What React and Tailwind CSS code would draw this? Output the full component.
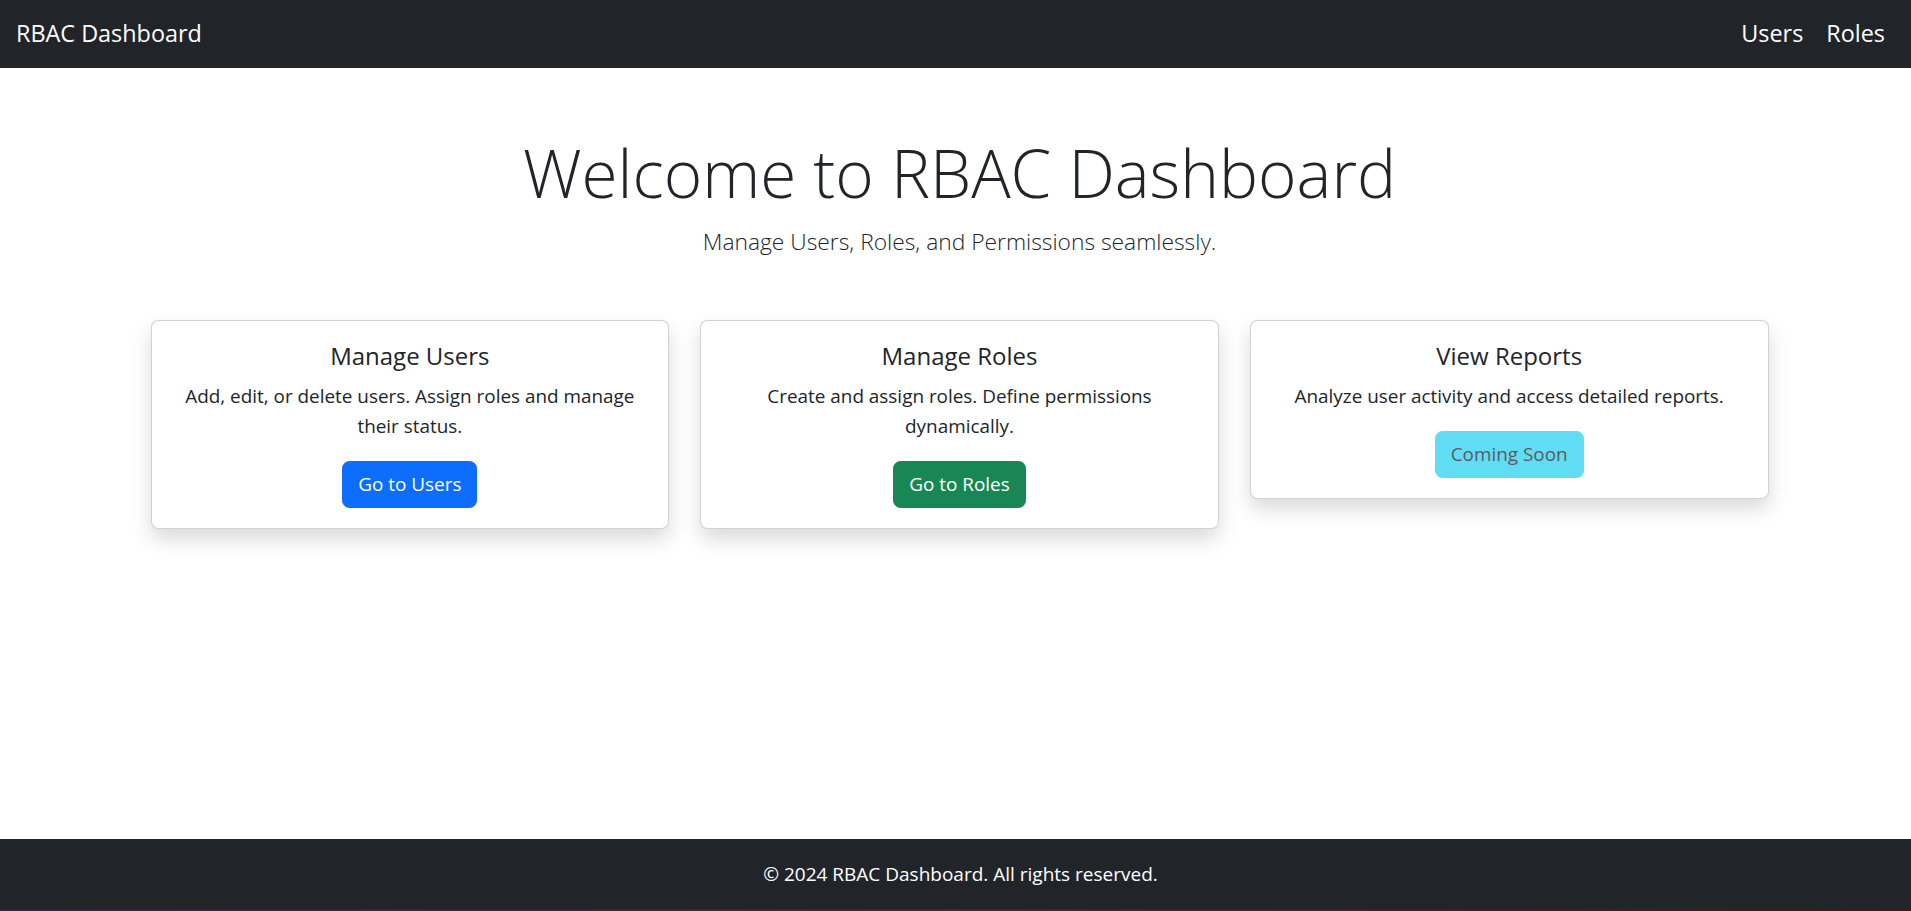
import React from "react";

function Card({ title, text, children }) {
  return (
    <div className="rounded-[7.5px] border border-black/[0.175] bg-white p-[20px] text-center shadow-[0_10px_20px_rgba(0,0,0,0.15)]">
      <h5 className="mb-[10px] text-[24px] font-medium leading-[30px] text-[#212529]">{title}</h5>
      <p className="mb-[20px] text-[18.9px] leading-[30px] text-[#212529]">{text}</p>
      {children}
    </div>
  );
}

export default function App() {
  return (
    <div className="flex h-[911px] flex-col overflow-hidden bg-white font-['Open_Sans',sans-serif] text-[#212529]">
      <nav className="flex h-[68px] shrink-0 items-center justify-between bg-[#212529] pl-[16px] pr-[15px]">
        <a href="#" className="text-[23.4px] leading-[37.5px] text-white">RBAC Dashboard</a>
        <div className="flex items-center">
          <a href="#" className="pl-[11px] pr-[12px] text-[23.4px] leading-[37.5px] text-white">Users</a>
          <a href="#" className="px-[11px] text-[23.4px] leading-[37.5px] text-white">Roles</a>
        </div>
      </nav>

      <main className="flex-1 pl-[8px]">
        <div className="mt-[63px] text-center">
          <h1 className="text-[65.7px] font-light leading-[84px] text-[#212529]">Welcome to RBAC Dashboard</h1>
          <p className="mt-[8px] text-[22.8px] font-light leading-[37.5px] text-[#212529]">
            Manage Users, Roles, and Permissions seamlessly.
          </p>
        </div>

        <div className="mx-auto mt-[59px] grid w-[1618px] grid-cols-3 items-start gap-[31px]">
          <Card title="Manage Users" text="Add, edit, or delete users. Assign roles and manage their status.">
            <a href="#" className="inline-block rounded-[7.5px] border border-[#0d6efd] bg-[#0d6efd] px-[15px] py-[7.5px] text-[18.9px] leading-[30px] text-white">
              Go to Users
            </a>
          </Card>
          <Card title="Manage Roles" text="Create and assign roles. Define permissions dynamically.">
            <a href="#" className="inline-block rounded-[7.5px] border border-[#198754] bg-[#198754] px-[15px] py-[7.5px] text-[18.9px] leading-[30px] text-white">
              Go to Roles
            </a>
          </Card>
          <Card title="View Reports" text="Analyze user activity and access detailed reports.">
            <button disabled className="inline-block rounded-[7.5px] border border-[#0dcaf0] bg-[#0dcaf0] px-[15px] py-[7.5px] text-[18.9px] leading-[30px] text-black opacity-65">
              Coming Soon
            </button>
          </Card>
        </div>
      </main>

      <footer className="flex h-[70px] shrink-0 items-center justify-center bg-[#212529] pl-[10px]">
        <p className="text-[19px] leading-[30px] text-white">© 2024 RBAC Dashboard. All rights reserved.</p>
      </footer>
      <div className="h-[2px] shrink-0 bg-gradient-to-r from-[#2f2740] via-[#3a2a3a] to-[#3b1a1c]" />
    </div>
  );
}
